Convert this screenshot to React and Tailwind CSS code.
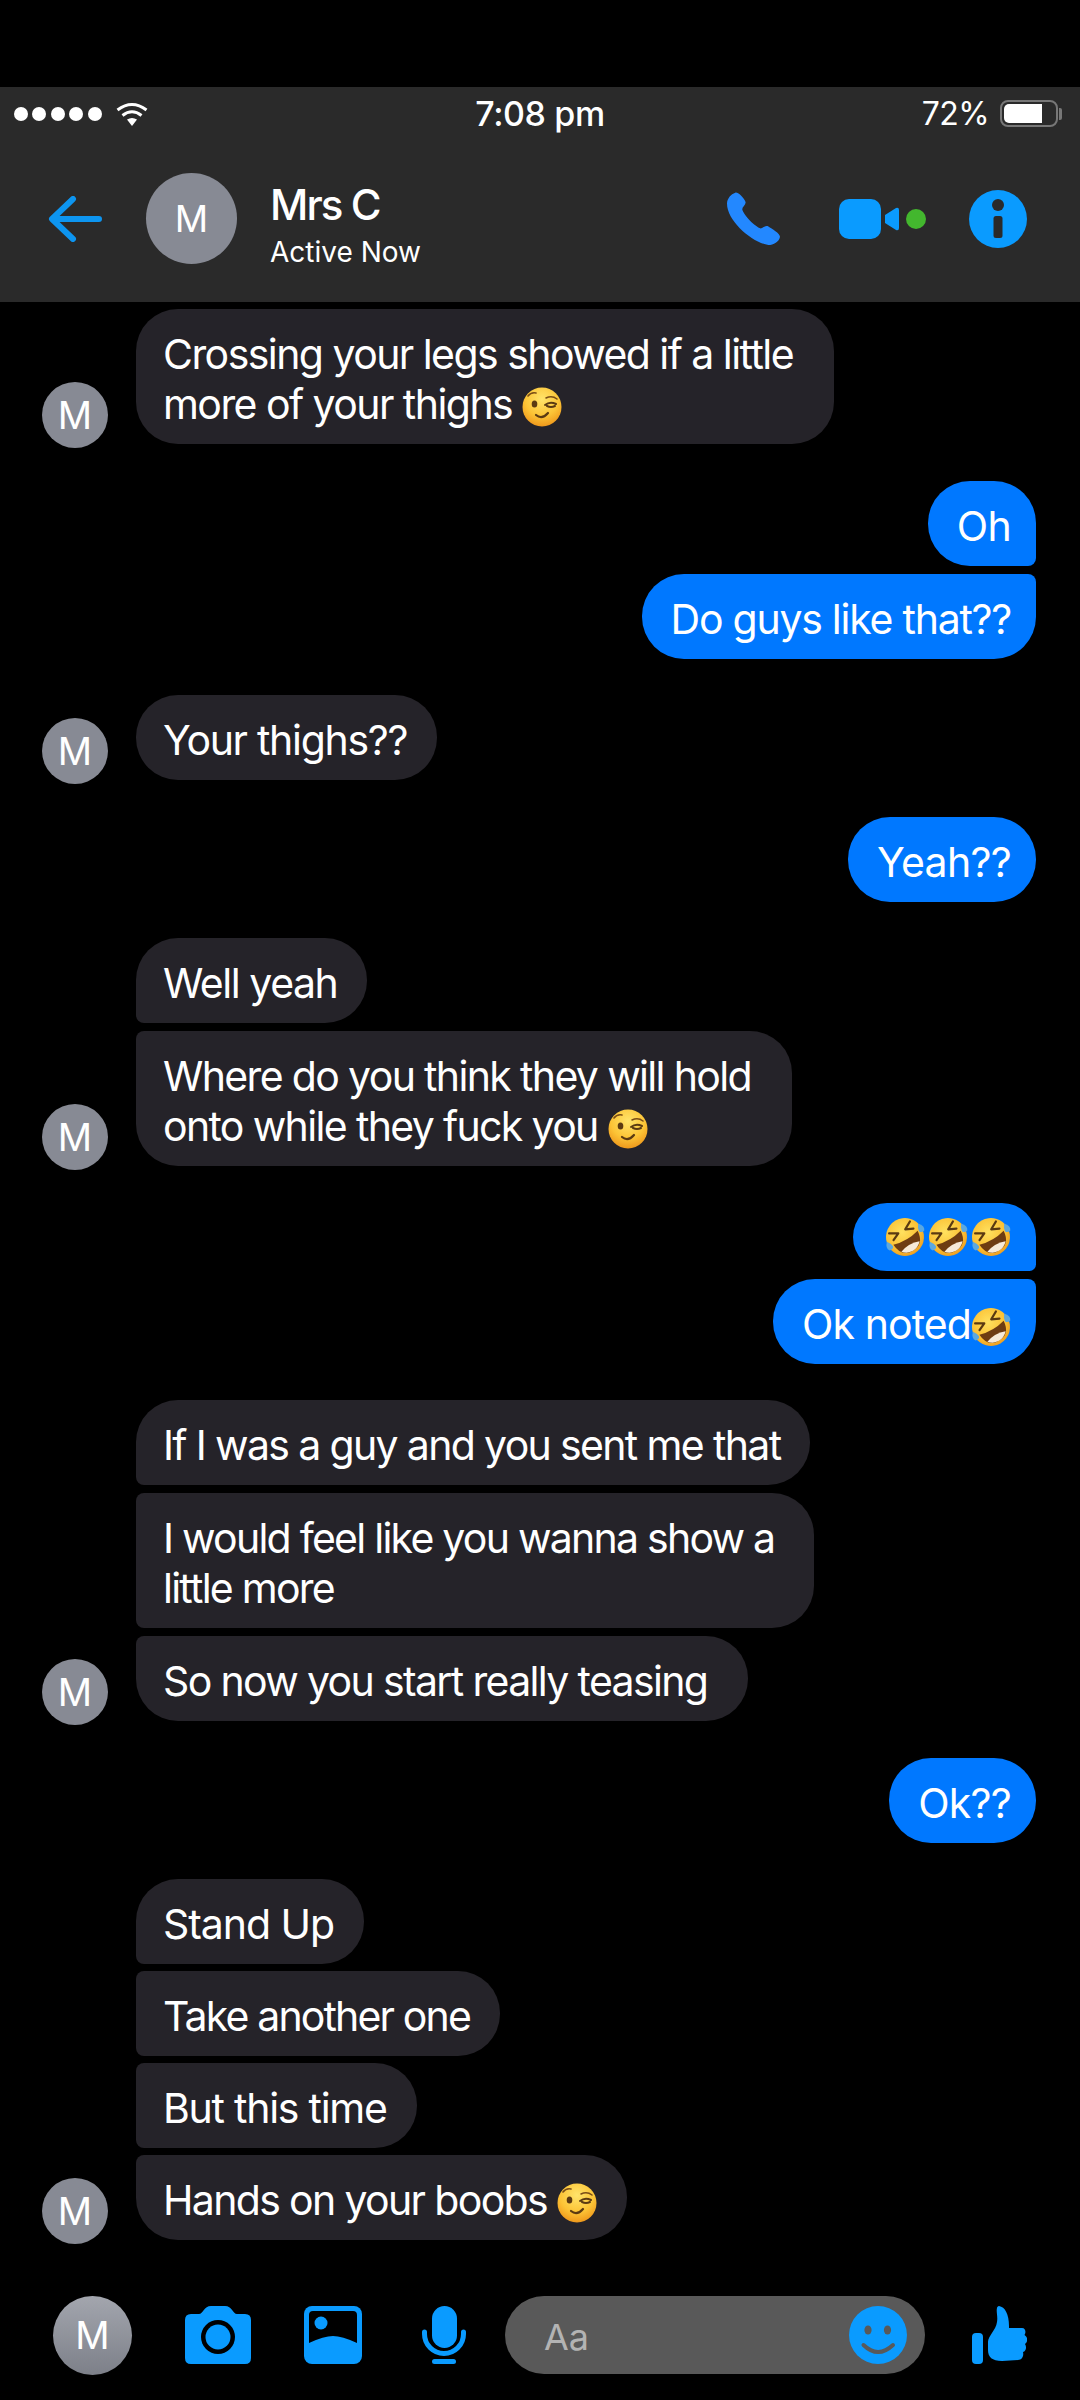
import { useId } from "react";

const font = { fontFamily: "Inter, 'Liberation Sans', sans-serif" };

function Wink() {
  const id = useId();
  return (
    <svg viewBox="0 0 40 40" className="inline-block w-[40px] h-[40px] align-[-8px]">
      <defs>
        <radialGradient id={id} cx="50%" cy="30%" r="72%">
          <stop offset="0%" stopColor="#ffe46b" />
          <stop offset="60%" stopColor="#fcc436" />
          <stop offset="100%" stopColor="#ee951a" />
        </radialGradient>
      </defs>
      <circle cx="20" cy="20" r="19.5" fill={`url(#${id})`} />
      <ellipse cx="12.5" cy="17" rx="2.8" ry="3.6" fill="#5b3a12" />
      <path d="M6 9 Q9 5 14 6" stroke="#7a4d16" strokeWidth="1.6" fill="none" strokeLinecap="round" />
      <path d="M24 11 Q30 8 35 12" stroke="#7a4d16" strokeWidth="1.6" fill="none" strokeLinecap="round" />
      <path d="M23 18 Q28 14 34 17 M25 19 Q29 21 33 19" stroke="#5b3a12" strokeWidth="2" fill="none" strokeLinecap="round" />
      <path d="M14 28 Q20 33 26 26" stroke="#5b3a12" strokeWidth="2.2" fill="none" strokeLinecap="round" />
    </svg>
  );
}

function Rofl() {
  const id = useId();
  return (
    <svg viewBox="0 0 40 40" className="inline-block w-[40px] h-[40px] align-[-8px] overflow-visible">
      <defs>
        <radialGradient id={id} cx="50%" cy="35%" r="70%">
          <stop offset="0%" stopColor="#ffe15f" />
          <stop offset="65%" stopColor="#fbc033" />
          <stop offset="100%" stopColor="#ec961b" />
        </radialGradient>
      </defs>
      <g transform="rotate(-30 20 20)">
        <circle cx="20" cy="20" r="19" fill={`url(#${id})`} />
        <path d="M8 9 L16 13.5 L8.5 17 M32 9 L24 13.5 L31.5 17" stroke="#5b3a12" strokeWidth="2.2" fill="none" strokeLinecap="round" strokeLinejoin="round" />
        <path d="M6 21 Q20 25 34 21 Q33 36 20 36 Q7 36 6 21Z" fill="#6e3c12" />
        <path d="M9.5 31 Q20 27 30.5 31 Q26 36 20 36 Q14 36 9.5 31Z" fill="#f7ead8" />
        <path d="M38 15 Q43 20 40 24 Q36 25 35 22 Q35 19 38 15Z" fill="#5ba8e0" />
        <path d="M2 15 Q-3 20 0 24 Q4 25 5 22 Q5 19 2 15Z" fill="#5ba8e0" />
      </g>
    </svg>
  );
}

function Avatar({ size, text, className = "" }) {
  return (
    <div className={`flex items-center justify-center rounded-full shrink-0 text-white ${size} ${text} ${className}`}>M</div>
  );
}

function bubbleRadius(side, count, i) {
  const first = i === 0;
  const last = i === count - 1;
  if (side === "left") {
    return `rounded-r-[42px] ${first ? "rounded-tl-[42px]" : "rounded-tl-[8px]"} ${last ? "rounded-bl-[42px]" : "rounded-bl-[8px]"}`;
  }
  return `rounded-l-[42px] ${first ? "rounded-tr-[42px]" : "rounded-tr-[8px]"} ${last ? "rounded-br-[42px]" : "rounded-br-[8px]"}`;
}

function Group({ side, items, continued, gap = "gap-[8px]" }) {
  const left = side === "left";
  return (
    <div className={`flex ${left ? "pl-[42px] justify-start" : "pr-[44px] justify-end"}`}>
      {left && <Avatar size="w-[66px] h-[66px] self-end mb-[-4px]" text="text-[38px]" className="bg-[#878a94] mr-[28px]" />}
      <div className={`flex flex-col ${gap} ${left ? "items-start" : "items-end"}`}>
        {items.map((item, i) => (
          <div
            key={i}
            className={`${left ? "bg-[#252329] pl-[27px]" : "bg-[#0078ff] pl-[29px] pr-[25px]"} ${item.pad || (left ? "pr-[30px]" : "")} ${bubbleRadius(side, items.length, i)} ${continued && i === 0 ? "rounded-tl-[8px]" : ""} ${item.compact ? "py-[14px] leading-[40px]" : "pt-[20px] pb-[15px] leading-[50px]"} ${item.track || "tracking-[-1.65px]"} text-[41px] text-white whitespace-pre-line`}
          >
            {item.content}
          </div>
        ))}
      </div>
    </div>
  );
}

function Header() {
  return (
    <div className="h-[215px] bg-[#2a2a2a] shrink-0 flex flex-col text-white">
      <div className="h-[53px] flex items-center justify-between pl-[14px] pr-[18px] relative">
        <div className="flex items-center">
          <div className="flex gap-[4.4px]">
            {[0, 1, 2, 3, 4].map((d) => (
              <div key={d} className="w-[14px] h-[14px] rounded-full bg-white" />
            ))}
          </div>
          <svg viewBox="0 0 32 24" className="w-[32px] h-[24px] ml-[14px]">
            <path d="M1.5 8 Q16 -3 30.5 8" stroke="#fff" strokeWidth="3" fill="none" />
            <path d="M6.5 13.5 Q16 6 25.5 13.5" stroke="#fff" strokeWidth="3" fill="none" />
            <path d="M11 17.5 Q16 14.5 21 17.5 L16 24Z" fill="#fff" />
          </svg>
        </div>
        <div className="absolute left-0 right-0 text-center text-[34px] font-medium tracking-[-0.4px]">7:08 pm</div>
        <div className="flex items-center">
          <span className="text-[32px] tracking-[-0.6px] mr-[11px]">72%</span>
          <div className="w-[58px] h-[27px] rounded-[8px] border-2 border-[#777777] p-[2px]">
            <div className="h-full w-[38px] bg-white rounded-l-[5px]" />
          </div>
          <div className="w-[3px] h-[12px] bg-[#777777] ml-[1px] rounded-r-[2px]" />
        </div>
      </div>
      <div className="flex items-center h-[91px] pl-[48px] mt-[33px]">
        <svg viewBox="0 0 54 46" className="w-[54px] h-[46px]">
          <path d="M25 3 L4 23 L25 43 M5 23 H51" stroke="#0d95f0" strokeWidth="6" fill="none" strokeLinecap="round" strokeLinejoin="round" />
        </svg>
        <Avatar size="w-[91px] h-[91px] ml-[44px]" text="text-[37px]" className="bg-[#878a94]" />
        <div className="ml-[33px] flex flex-col self-start pt-[7px]">
          <div className="text-[42px] leading-[50px] font-medium tracking-[-1.9px]">Mrs C</div>
          <div className="text-[28px] leading-[36px] mt-[4px]">Active Now</div>
        </div>
        <svg viewBox="0 0 160 160" className="w-[53px] h-[53px] ml-auto">
          <path d="M25 2 C35 0 52 20 56 30 C58 38 46 45 46 52 C50 70 85 105 102 110 C110 108 116 100 125 104 C135 110 160 125 160 135 C158 150 140 160 125 160 C80 155 0 90 0 35 C0 20 12 6 25 2Z" fill="#2388ff" />
        </svg>
        <div className="flex items-center ml-[59px]">
          <div className="w-[42px] h-[40px] rounded-[10px] bg-[#0a9bff]" />
          <svg viewBox="0 0 14 24" className="w-[14px] h-[24px] ml-[4px]">
            <path d="M0 8 L11 1 Q14 0 14 3 V21 Q14 24 11 23 L0 16Z" fill="#0a9bff" />
          </svg>
          <div className="w-[20px] h-[20px] rounded-full bg-[#43b72e] ml-[7px]" />
        </div>
        <svg viewBox="0 0 58 58" className="w-[58px] h-[58px] ml-[43px] mr-[53px]">
          <circle cx="29" cy="29" r="29" fill="#0a9bff" />
          <circle cx="29" cy="15" r="6" fill="#2a2a2a" />
          <rect x="24.5" y="26" width="9" height="22" rx="2.5" fill="#2a2a2a" />
        </svg>
      </div>
    </div>
  );
}

function Footer() {
  return (
    <div className="flex items-center h-[78px] mt-auto mb-[26px] pl-[53px] shrink-0">
      <Avatar size="w-[79px] h-[79px]" text="text-[38px]" className="bg-gradient-to-b from-[#a3a6ae] to-[#7d8089]" />
      <svg viewBox="0 0 66 58" className="w-[66px] h-[58px] ml-[53px]">
        <path d="M6 8 H14 C18 8 19 0 26 0 H40 C47 0 48 8 52 8 H60 Q66 8 66 14 V52 Q66 58 60 58 H6 Q0 58 0 52 V14 Q0 8 6 8Z" fill="#0a9bff" />
        <circle cx="33" cy="31" r="17" fill="#000" />
        <circle cx="33" cy="31" r="12.5" fill="#0a9bff" />
      </svg>
      <svg viewBox="0 0 58 58" className="w-[58px] h-[58px] ml-[53px]">
        <rect width="58" height="58" rx="8" fill="#0a9bff" />
        <path d="M5 37 V9 Q5 5 9 5 H49 Q53 5 53 9 V37 Q38 30 29 30 Q20 30 5 37Z" fill="#000" />
        <circle cx="17" cy="17" r="6.5" fill="#0a9bff" />
      </svg>
      <svg viewBox="0 0 44 58" className="w-[44px] h-[58px] ml-[60px]">
        <rect x="10" y="0" width="25" height="42" rx="12.5" fill="#0a9bff" />
        <path d="M2.5 26 V28 A19.5 19.5 0 0 0 41.5 28 V26" stroke="#0a9bff" strokeWidth="5" fill="none" strokeLinecap="round" />
        <rect x="10" y="53" width="24" height="5" rx="2.5" fill="#0a9bff" />
      </svg>
      <div className="w-[420px] h-[78px] rounded-full bg-[#595959] ml-[39px] flex items-center pl-[39px] pr-[18px]">
        <span className="text-[36px] text-[#b3b3b3] pt-[3px]">Aa</span>
        <svg viewBox="0 0 58 58" className="w-[58px] h-[58px] ml-auto">
          <circle cx="29" cy="29" r="29" fill="#0a9bff" />
          <ellipse cx="19" cy="24" rx="3.6" ry="4.6" fill="#595959" />
          <ellipse cx="38.5" cy="24" rx="3.6" ry="4.6" fill="#595959" />
          <path d="M14.5 39 Q29 53 44 39" stroke="#595959" strokeWidth="4" fill="none" strokeLinecap="round" />
        </svg>
      </div>
      <svg viewBox="0 0 55 58" className="w-[55px] h-[58px] ml-[47px]">
        <rect x="0" y="27" width="11" height="31" rx="4" fill="#0a9bff" />
        <path d="M27 0 C33 1 37 8 37 20 V22 H50 C54 22 54 27 52.5 29 C56 31 56 36 53 38 C55 41 54 45 51 46 C52 50 50 54 46 54 L30 55 C20 55 16 51 16 44 V36 C16 30 24 24 25 16 C26 10 24 6 25 2 C25 1 26 0 27 0Z" fill="#0a9bff" />
      </svg>
    </div>
  );
}

export default function App() {
  return (
    <div className="w-[1080px] h-[2400px] bg-black flex flex-col overflow-hidden pt-[87px]" style={font}>
      <Header />
      <div className="flex flex-col gap-[36.5px] pt-[7px]">
        <Group
          side="left"
          continued
          items={[{ track: "tracking-[-1.55px]", pad: "pr-[41px]", content: <>{"Crossing your legs showed if a little\nmore of your thighs "}<Wink /></> }]}
        />
        <Group
          side="right"
          items={[
            { track: "tracking-[-0.65px]", content: "Oh" },
            { track: "tracking-[-1.25px]", content: "Do guys like that??" },
          ]}
        />
        <Group side="left" items={[{ track: "tracking-[-1.3px]", content: "Your thighs??" }]} />
        <Group side="right" items={[{ track: "tracking-[-0.7px]", content: "Yeah??" }]} />
        <Group
          side="left"
          items={[
            { track: "tracking-[-1.45px]", content: "Well yeah" },
            { pad: "pr-[41px]", content: <>{"Where do you think they will hold\nonto while they fuck you "}<Wink /></> },
          ]}
        />
        <Group
          side="right"
          items={[
            { compact: true, pad: "pl-[32px]", content: <span className="flex gap-[3px]"><Rofl /><Rofl /><Rofl /></span> },
            { track: "tracking-[-0.9px]", content: <>Ok noted<Rofl /></> },
          ]}
        />
        <Group
          side="left"
          items={[
            { content: "If I was a guy and you sent me that" },
            { track: "tracking-[-1.75px]", pad: "pr-[40px]", content: "I would feel like you wanna show a\nlittle more" },
            { pad: "pr-[41px]", content: "So now you start really teasing" },
          ]}
        />
        <Group side="right" items={[{ track: "tracking-[-0.75px]", content: "Ok??" }]} />
        <Group
          side="left"
          gap="gap-[7px]"
          items={[
            { track: "tracking-[-1.05px]", content: "Stand Up" },
            { track: "tracking-[-1.85px]", content: "Take another one" },
            { track: "tracking-[-1.25px]", content: "But this time" },
            { content: <>Hands on your boobs <Wink /></> },
          ]}
        />
      </div>
      <Footer />
    </div>
  );
}
